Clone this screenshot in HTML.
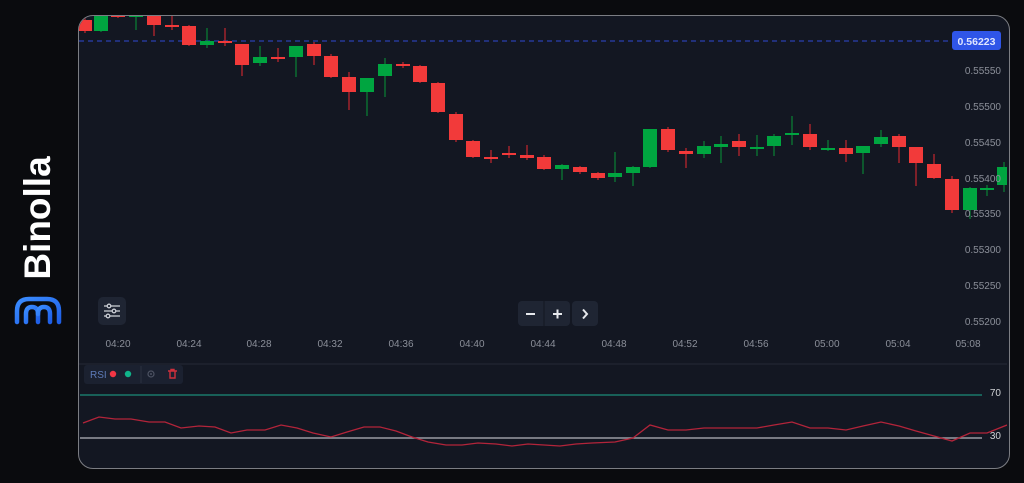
<!DOCTYPE html>
<html><head><meta charset="utf-8"><style>
body{margin:0;width:1024px;height:483px;background:#0a0b0e;overflow:hidden;position:relative;font-family:"Liberation Sans",sans-serif}
.card{position:absolute;left:78px;top:15px;width:930px;height:452px;border:1px solid #7b7d83;border-radius:15px;background:#131722;overflow:hidden}
.brand{position:absolute;left:38px;top:218px;transform:translate(-50%,-50%) rotate(-90deg);color:#fff;font-weight:bold;font-size:37px;white-space:nowrap}
</style></head><body>
<div class="brand">Binolla</div>
<svg style="position:absolute;left:0;top:0" width="80" height="483"><defs><linearGradient id="g" x1="0" y1="0" x2="1" y2="1"><stop offset="0" stop-color="#3a8cff"/><stop offset="1" stop-color="#1f5fe6"/></linearGradient></defs>
<g fill="none" stroke="url(#g)" stroke-width="4.5" stroke-linecap="round">
<path d="M17 322 V311 Q17 299 29 299 H47 Q59 299 59 311 V322"/>
<path d="M26 322 V314 Q26 307 32 307 Q38 307 38 314 V322"/>
<path d="M38 314 Q38 307 44 307 Q50 307 50 314 V322"/>
</g></svg>
<div class="card"></div>
<svg style="position:absolute;left:0;top:0" width="1024" height="483">
<defs><clipPath id="c"><rect x="79" y="16" width="928" height="450" rx="14"/></clipPath></defs>
<g clip-path="url(#c)">
<line x1="79" y1="41" x2="950" y2="41" stroke="#2a3fb0" stroke-width="1.3" stroke-dasharray="5,4"/>
<g id="candles"></g>
<line x1="79" y1="364" x2="1007" y2="364" stroke="#252a36"/>
<line x1="80" y1="395" x2="982" y2="395" stroke="#1b8c7a" stroke-width="1.3"/>
<line x1="80" y1="438" x2="982" y2="438" stroke="#9a9ca3" stroke-width="1.5"/>
<polyline fill="none" stroke="#b3243a" stroke-width="1.3" points="83,423 99,417 115,419 131,419 149,422 165,422 181,428 199,426 215,427 231,433 247,430 265,430 281,425 297,428 313,433 331,437 347,432 364,427 380,427 396,431 412,437 428,442 446,445 462,445 478,443 496,444 512,446 528,444 544,445 560,446 576,444 592,443 615,442 633,438 650,425 668,430 686,430 704,428 739,428 757,428 774,425 792,422 810,428 828,428 846,430 863,426 881,422 899,426 916,431 934,436 952,441 970,433 987,433 1007,425"/>
<rect x="84" y="365" width="99" height="19" rx="3" fill="#1b2130"/>
<line x1="141" y1="366" x2="141" y2="383" stroke="#2b3140"/>
</g>
<text x="90" y="378" fill="#5d7ab8" font-size="10">RSI</text>
<circle cx="113" cy="374" r="3.2" fill="#f23645"/>
<circle cx="128" cy="374" r="3.2" fill="#10b48a"/>
<circle cx="151" cy="374" r="3" fill="none" stroke="#4c5262" stroke-width="1.2"/><circle cx="151" cy="374" r="1" fill="#4c5262"/>
<path d="M168 371 h9 M170 371 v7 h5 v-7 M171 371 v-1.5 h3 v1.5" fill="none" stroke="#d0303c" stroke-width="1.4"/>
<g fill="#8b8f99" font-size="10" text-anchor="end">
<text x="1001" y="74">0.55550</text><text x="1001" y="110">0.55500</text><text x="1001" y="146">0.55450</text><text x="1001" y="182">0.55400</text><text x="1001" y="217">0.55350</text><text x="1001" y="253">0.55300</text><text x="1001" y="289">0.55250</text><text x="1001" y="325">0.55200</text>
<text x="1001" y="396" fill="#d0d2d6">70</text><text x="1001" y="439" fill="#d0d2d6">30</text>
</g>
<rect x="952" y="31" width="49" height="19" rx="3" fill="#2f55e8"/>
<text x="976.5" y="45" fill="#dfe6ff" font-size="10.5" text-anchor="middle" font-weight="bold">0.56223</text>
<g fill="#8b8f99" font-size="10" text-anchor="middle">
<text x="118" y="347">04:20</text><text x="189" y="347">04:24</text><text x="259" y="347">04:28</text><text x="330" y="347">04:32</text><text x="401" y="347">04:36</text><text x="472" y="347">04:40</text><text x="543" y="347">04:44</text><text x="614" y="347">04:48</text><text x="685" y="347">04:52</text><text x="756" y="347">04:56</text><text x="827" y="347">05:00</text><text x="898" y="347">05:04</text><text x="968" y="347">05:08</text>
</g>
<rect x="98" y="297" width="28" height="28" rx="5" fill="#1f2533"/>
<g stroke="#c9ccd3" stroke-width="1.3" fill="#1f2533"><line x1="104" y1="306" x2="120" y2="306"/><line x1="104" y1="311" x2="120" y2="311"/><line x1="104" y1="316" x2="120" y2="316"/><circle cx="109" cy="306" r="1.8"/><circle cx="114" cy="311" r="1.8"/><circle cx="108" cy="316" r="1.8"/></g>
<rect x="518" y="301" width="52" height="25" rx="4" fill="#1f2533"/><line x1="544" y1="301" x2="544" y2="326" stroke="#131722"/>
<rect x="572" y="301" width="26" height="25" rx="4" fill="#1f2533"/>
<g stroke="#e6e8ec" stroke-width="2" fill="none"><line x1="526" y1="314" x2="535" y2="314"/><line x1="553" y1="314" x2="562" y2="314"/><line x1="557.5" y1="309.5" x2="557.5" y2="318.5"/><path d="M583 309.5 L587 314 L583 318.5"/></g>
</svg>
<script>
var C=[[85,'r',20,31,18,33],[101,'g',15,31,14,32],[118,'r',15,17,14,18],[136,'g',15,16,14,30],[154,'r',16,25,14,36],[172,'r',25,26,15,30],[189,'r',26,45,25,46],[207,'g',41,45,28,48],[225,'r',41,43,28,46],[242,'r',44,65,44,76],[260,'g',57,63,46,66],[278,'r',57,58,48,62],[296,'g',46,57,46,77],[314,'r',44,56,42,65],[331,'r',56,77,54,78],[349,'r',77,92,72,110],[367,'g',78,92,78,116],[385,'g',64,76,58,97],[403,'r',64,65,62,68],[420,'r',66,82,65,83],[438,'r',83,112,82,113],[456,'r',114,140,112,142],[473,'r',141,157,140,158],[491,'r',157,158,150,163],[509,'r',153,154,146,158],[527,'r',155,158,145,160],[544,'r',157,169,155,170],[562,'g',165,169,164,180],[580,'r',167,172,166,174],[598,'r',173,178,172,180],[615,'g',173,177,152,182],[633,'g',167,173,166,186],[650,'g',129,167,129,168],[668,'r',129,150,127,152],[686,'r',151,154,148,168],[704,'g',146,154,141,158],[721,'g',144,147,136,163],[739,'r',141,147,134,156],[757,'g',147,148,135,156],[774,'g',136,146,134,156],[792,'g',133,135,116,145],[810,'r',134,147,124,150],[828,'g',148,149,140,151],[846,'r',148,154,140,162],[863,'g',146,153,146,174],[881,'g',137,144,130,147],[899,'r',136,147,134,163],[916,'r',147,163,147,186],[934,'r',164,178,154,179],[952,'r',179,210,176,213],[970,'g',188,210,187,219],[987,'g',188,189,185,196],[1004,'g',167,185,162,192]];
var s='';C.forEach(function(c){var col=c[1]=='g'?'#00a540':'#f23a3a',w=c[1]=='g'?'#0a7a34':'#b8262e';s+='<line x1="'+c[0]+'" y1="'+c[4]+'" x2="'+c[0]+'" y2="'+c[5]+'" stroke="'+w+'" stroke-width="1.3"/><rect x="'+(c[0]-7)+'" y="'+c[2]+'" width="14" height="'+Math.max(2,c[3]-c[2])+'" fill="'+col+'"/>';});
document.getElementById('candles').innerHTML=s;
</script>
</body></html>
